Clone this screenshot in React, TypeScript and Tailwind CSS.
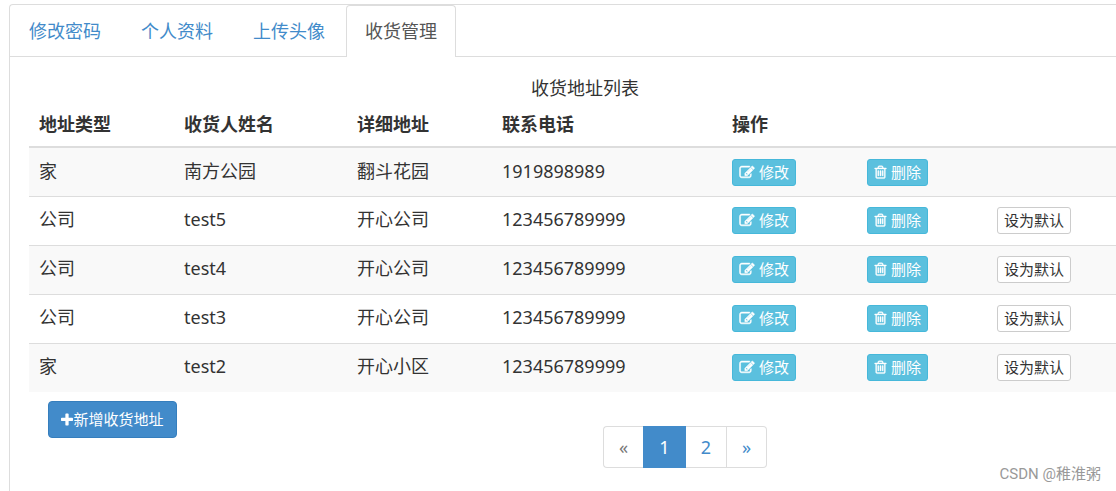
import { useState } from "react";

const EDIT =
  "M888 1184l116-116-152-152-116 116v56h96v96h56zm440-720q-16-16-33 1l-350 350q-17 17-1 33t33-1l350-350q17-17 1-33zm80 594v190q0 119-84.5 203.5t-203.5 84.5h-832q-119 0-203.5-84.5t-84.5-203.5v-832q0-119 84.5-203.5t203.5-84.5h832q63 0 117 25 15 7 18 23 3 17-9 29l-49 49q-14 14-32 8-23-6-45-6h-832q-66 0-113 47t-47 113v832q0 66 47 113t113 47h832q66 0 113-47t47-113v-126q0-13 9-22l64-64q15-15 35-7t20 29zm-96-738l288 288-672 672h-288v-288zm444 132l-92 92-288-288 92-92q28-28 68-28t68 28l152 152q28 28 28 68t-28 68z";
const TRASH =
  "M704 736v576q0 14-9 23t-23 9h-64q-14 0-23-9t-9-23v-576q0-14 9-23t23-9h64q14 0 23 9t9 23zm256 0v576q0 14-9 23t-23 9h-64q-14 0-23-9t-9-23v-576q0-14 9-23t23-9h64q14 0 23 9t9 23zm256 0v576q0 14-9 23t-23 9h-64q-14 0-23-9t-9-23v-576q0-14 9-23t23-9h64q14 0 23 9t9 23zm128 724v-948h-896v948q0 22 7 40.5t14.5 27 10.5 8.5h832q3 0 10.5-8.5t14.5-27 7-40.5zm-672-1076h448l-48-117q-7-9-17-11h-317q-10 2-17 11zm928 32v64q0 14-9 23t-23 9h-96v948q0 83-47 143.5t-113 60.5h-832q-66 0-113-58.5t-47-141.5v-952h-96q-14 0-23-9t-9-23v-64q0-14 9-23t23-9h309l70-167q15-37 54-63t79-26h320q40 0 79 26t54 63l70 167h309q14 0 23 9t9 23z";
const PLUS =
  "M1600 736v192q0 40-28 68t-68 28h-416v416q0 40-28 68t-68 28h-192q-40 0-68-28t-28-68v-416h-416q-40 0-68-28t-28-68v-192q0-40 28-68t68-28h416v-416q0-40 28-68t68-28h192q40 0 68 28t28 68v416h416q40 0 68 28t28 68z";

const tabs = ["修改密码", "个人资料", "上传头像", "收货管理"];

const addresses = [
  { type: "家", name: "南方公园", address: "翻斗花园", phone: "1919898989", isDefault: true },
  { type: "公司", name: "test5", address: "开心公司", phone: "123456789999", isDefault: false },
  { type: "公司", name: "test4", address: "开心公司", phone: "123456789999", isDefault: false },
  { type: "公司", name: "test3", address: "开心公司", phone: "123456789999", isDefault: false },
  { type: "家", name: "test2", address: "开心小区", phone: "123456789999", isDefault: false },
];

function PlusIcon() {
  return (
    <svg viewBox="192 0 1408 1792" className="h-4 w-3 fill-current" aria-hidden="true">
      <path d={PLUS} />
    </svg>
  );
}

function TrashIcon() {
  return (
    <svg viewBox="140 40 1512 1792" className="h-[15px] w-[13px] fill-current stroke-current" strokeWidth="45" aria-hidden="true">
      <path d={TRASH} />
    </svg>
  );
}

function EditIcon() {
  return (
    <svg viewBox="-40 0 1872 1792" className="h-[15px] w-4 fill-current stroke-current" strokeWidth="60" aria-hidden="true">
      <path d={EDIT} />
    </svg>
  );
}

const small = "flex h-[27px] items-center gap-1 rounded-[3px] border px-[6px] text-[15px] leading-[25px] whitespace-nowrap";
const info = `${small} border-[#46b8da] bg-[#5bc0de] text-white`;
const cell = "px-[10px] pt-[10px] align-top leading-[25px]";
const action = "px-[10px] pt-[10px] align-top";
const pageLink = "flex h-full items-center justify-center";

export default function App() {
  const [tab, setTab] = useState(3);
  return (
    <div className="relative flex min-h-screen overflow-hidden bg-white pt-1 pl-[9px] font-['Noto_Sans','Noto_Sans_CJK_SC',sans-serif] text-[18px] leading-[25px] text-[#333]">
      <main className="-mr-[45px] min-w-0 flex-1 rounded-tl border-t border-l border-[#ddd]">
        <nav className="flex gap-[2px] border-b border-[#ddd]">
          {tabs.map((label, i) => (
            <button
              key={label}
              type="button"
              onClick={() => setTab(i)}
              className={
                i === tab
                  ? "-mb-px h-[52px] rounded-t border border-b-0 border-[#ddd] bg-white px-[18px] text-[#555]"
                  : "-mb-px h-[52px] rounded-t border border-b-0 border-transparent px-[18px] text-[#428bca]"
              }
            >
              {label}
            </button>
          ))}
        </nav>

        <section className="pt-[19px] pr-5 pl-[19px]">
          <table className="w-full table-fixed border-separate border-spacing-0 text-left">
            <caption className="leading-[25px]">收货地址列表</caption>
            <colgroup>
              <col className="w-[145px]" />
              <col className="w-[173px]" />
              <col className="w-[145px]" />
              <col className="w-[230px]" />
              <col className="w-[135px]" />
              <col className="w-[130px]" />
              <col />
            </colgroup>
            <thead>
              <tr className="[&>*]:h-[47px] [&>*]:border-b-2 [&>*]:border-[#ddd] [&>*]:px-[10px] [&>*]:pt-[11px] [&>*]:align-top [&>*]:font-bold">
                <th scope="col">地址类型</th>
                <th scope="col">收货人姓名</th>
                <th scope="col">详细地址</th>
                <th scope="col">联系电话</th>
                <th scope="col" colSpan={3}>操作</th>
              </tr>
            </thead>
            <tbody>
              {addresses.map((a) => (
                <tr
                  key={a.name}
                  className="odd:bg-[#f9f9f9] [&>td]:h-[49px] [&>td]:border-t [&>td]:border-[#ddd] first:[&>td]:h-12 first:[&>td]:border-t-0 first:[&>td]:pt-[11px]"
                >
                  <td className={cell}>{a.type}</td>
                  <td className={cell}>{a.name}</td>
                  <td className={cell}>{a.address}</td>
                  <td className={cell}>{a.phone}</td>
                  <td className={action}>
                    <button type="button" className={info}>
                      <EditIcon />
                      修改
                    </button>
                  </td>
                  <td className={action}>
                    <button type="button" className={info}>
                      <TrashIcon />
                      删除
                    </button>
                  </td>
                  <td className={action}>
                    {!a.isDefault && (
                      <button type="button" className={`${small} border-[#ccc] bg-white text-[#333]`}>
                        设为默认
                      </button>
                    )}
                  </td>
                </tr>
              ))}
            </tbody>
          </table>

          <div className="flex items-start pt-[9px] pl-[19px]">
            <button
              type="button"
              className="flex h-[37px] w-[129px] items-center justify-center rounded border border-[#357ebd] bg-[#428bca] text-[15px] whitespace-nowrap text-white"
            >
              <PlusIcon />
              新增收货地址
            </button>
            <ul className="mt-[25px] ml-[426px] flex h-[42px] text-[#428bca]">
              <li className="w-10 rounded-l border border-r-0 border-[#ddd]">
                <a href="#prev" aria-label="上一页" className={`${pageLink} text-[#777]`}>«</a>
              </li>
              <li className="w-[43px] bg-[#428bca] text-white">
                <a href="#1" aria-current="page" className={pageLink}>1</a>
              </li>
              <li className="w-[41px] border-y border-r border-[#ddd]">
                <a href="#2" className={pageLink}>2</a>
              </li>
              <li className="w-10 rounded-r border border-l-0 border-[#ddd]">
                <a href="#next" aria-label="下一页" className={pageLink}>»</a>
              </li>
            </ul>
          </div>
        </section>
      </main>
      <span className="absolute right-[15px] bottom-[4px] font-[Roboto,'Noto_Sans_CJK_SC',sans-serif] text-[15px] text-[#999]">
        CSDN @稚淮粥
      </span>
    </div>
  );
}
